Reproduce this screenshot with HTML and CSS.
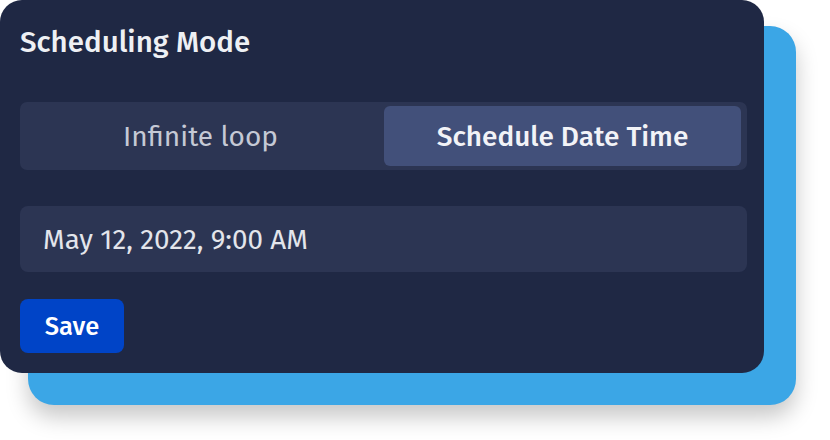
FILE: index.html
```html
<!DOCTYPE html>
<html>
<head>
<meta charset="utf-8">
<link rel="stylesheet" href="styles.css">
</head>
<body>
<div class="stage">
  <div class="backdrop"></div>
  <div class="card">
    <h2 class="title">Scheduling Mode</h2>
    <div class="segmented">
      <button class="seg">Infinite loop</button>
      <button class="seg active">Schedule Date Time</button>
    </div>
    <div class="field">May 12, 2022, 9:00 AM</div>
    <button class="save">Save</button>
  </div>
</div>
</body>
</html>
```
FILE: styles.css
```css
html, body {
  margin: 0;
  padding: 0;
  background: #ffffff;
}
body {
  font-family: "Fira Sans", "Noto Sans", "Open Sans", sans-serif;
  width: 830px;
  height: 440px;
  overflow: hidden;
}
.stage {
  position: relative;
  width: 764px;
}
.backdrop {
  position: absolute;
  left: 28px;
  top: 26px;
  right: -32px;
  bottom: -32px;
  background: #3ba6e6;
  border-radius: 26px;
  box-shadow: 0 12px 22px rgba(0, 0, 0, 0.22);
}
.card {
  position: relative;
  z-index: 1;
  background: #1f2844;
  border-radius: 22px;
  height: 373px;
  box-sizing: border-box;
  padding: 22px 17px 20px 20px;
  display: flex;
  flex-direction: column;
  align-items: flex-start;
}
.title {
  margin: 0;
  height: 40px;
  line-height: 40px;
  font-size: 29.5px;
  font-weight: 500;
  color: #eef0f4;
}
.segmented {
  margin-top: 40px;
  align-self: stretch;
  height: 68px;
  box-sizing: border-box;
  padding: 4px 6px 4px 5px;
  background: #2c3553;
  border-radius: 7px;
  display: grid;
  grid-template-columns: 351px 1fr;
  column-gap: 8px;
}
.seg {
  border: 0;
  margin: 0;
  background: transparent;
  border-radius: 6px;
  font-family: inherit;
  font-size: 28px;
  font-weight: 400;
  color: #c5c9d5;
}
.seg.active {
  background: #42507a;
  color: #f2f3f7;
  font-weight: 500;
}
.field {
  margin-top: 36px;
  align-self: stretch;
  height: 66px;
  box-sizing: border-box;
  padding: 0 23px;
  background: #2c3553;
  border-radius: 8px;
  display: flex;
  align-items: center;
  font-size: 27.8px;
  color: #e3e5eb;
}
.save {
  margin-top: 27px;
  width: 104px;
  height: 54px;
  border: 0;
  border-radius: 8px;
  background: #0044c7;
  color: #ffffff;
  font-family: inherit;
  font-size: 25.5px;
  font-weight: 500;
}
```
